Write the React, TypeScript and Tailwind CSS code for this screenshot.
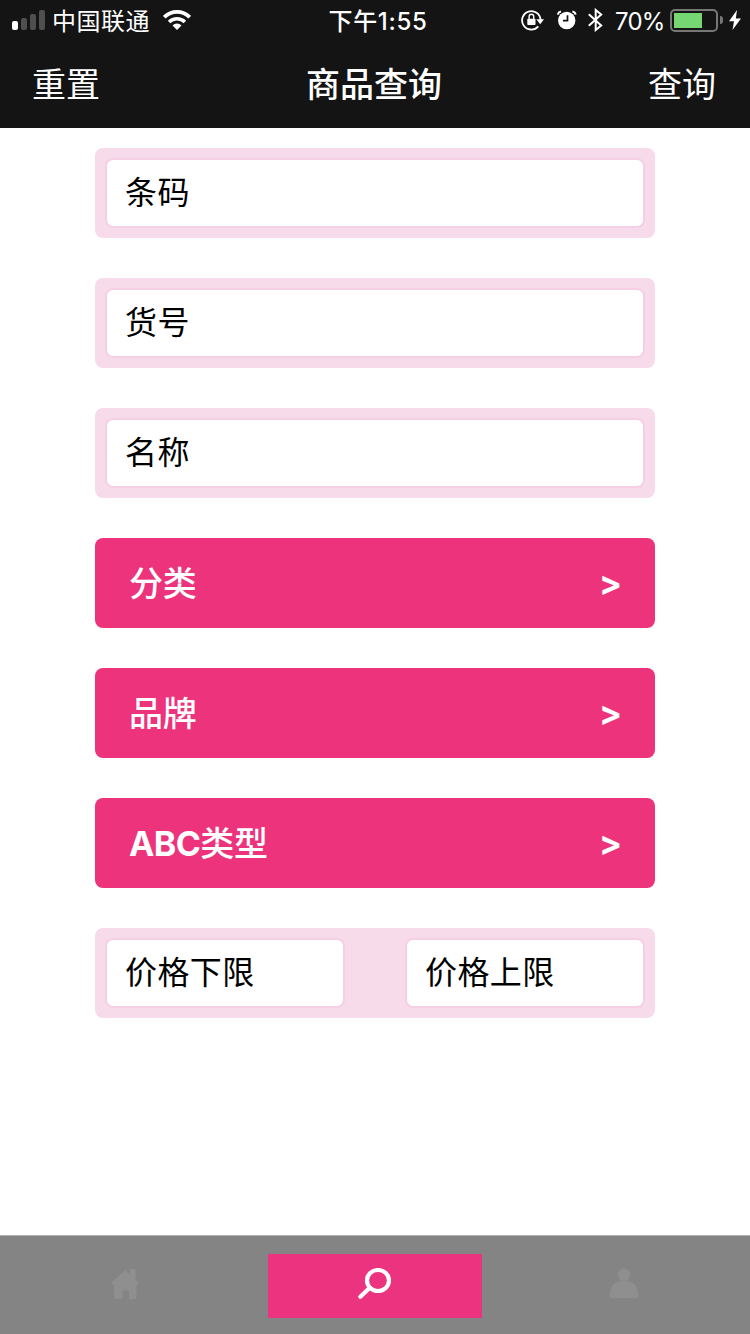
const textFields = ["条码", "货号", "名称"]
const pickers = ["分类", "品牌", "ABC类型"]

function StatusBar() {
  return (
    <div className="grid h-10 grid-cols-3 items-center text-2xl leading-10">
      <div className="flex items-center pl-3">
        <div className="flex h-5 items-end gap-[3px]">
          <span className="h-[9px] w-1.5 rounded-[2px] bg-white" />
          <span className="h-3 w-1.5 rounded-[2px] bg-[#4f4f4f]" />
          <span className="h-4 w-1.5 rounded-[2px] bg-[#4f4f4f]" />
          <span className="h-5 w-1.5 rounded-[2px] bg-[#4f4f4f]" />
        </div>
        <span className="ml-[7px] w-[98px] whitespace-nowrap pt-[3px] leading-[37px] tracking-[0.5px]">
          中国联通
        </span>
        <svg
          className="ml-[13px] h-5 w-7 shrink-0"
          viewBox="0 0 28 20"
          fill="none"
          stroke="currentColor">
          <path d="M1.3 7.2a18 18 0 0 1 25.4 0" strokeWidth="3.8" />
          <path d="M6.1 12.1a11.2 11.2 0 0 1 15.8 0" strokeWidth="3.5" />
          <path
            d="M9.5 15.4a6.5 6.5 0 0 1 9 0L14 20z"
            fill="currentColor"
            stroke="none"
          />
        </svg>
      </div>

      <div className="pl-1.5 pt-[3px] text-center font-medium leading-[37px] tracking-[0.7px]">
        下午1:55
      </div>

      <div className="flex items-center justify-end pr-[9px]">
        {/* Rotation lock */}
        <svg
          className="mr-px h-[22px] w-6 shrink-0"
          viewBox="0 0 24 22"
          fill="none">
          <path
            d="M17.3 17.3A9.2 9.2 0 1 1 19.5 11"
            stroke="currentColor"
            strokeWidth="1.8"
          />
          <path d="M15.3 10.2h7.7l-3.8 5z" fill="currentColor" />
          <rect x="6.3" y="9.7" width="8.2" height="6.3" rx="0.8" fill="currentColor" />
          <path
            d="M8.1 10V7.5a2.3 2.3 0 0 1 4.6 0V10"
            stroke="currentColor"
            strokeWidth="1.4"
          />
        </svg>
        {/* Alarm */}
        <svg
          className="ml-[11px] h-5 w-5 shrink-0"
          viewBox="0 0 20 20"
          fill="none"
          stroke="currentColor">
          <circle cx="9.7" cy="10.5" r="8.7" fill="currentColor" stroke="none" />
          <path d="M.8 4.6Q1.3 2 4 1.6M18.6 4.6Q18.1 2 15.4 1.6" strokeWidth="2" />
          <path d="M10.5 5.2v5.5H6" stroke="#141414" strokeWidth="1.7" />
        </svg>
        {/* Bluetooth */}
        <svg
          className="ml-[11px] h-6 w-[15px] shrink-0"
          viewBox="0 0 15 24"
          fill="none"
          stroke="currentColor"
          strokeWidth="2">
          <path d="M.8 6.3l12.4 11.2L7.7 22V2l5.5 4.6L.8 17.8" />
        </svg>
        <span className="ml-3 w-[49px] whitespace-nowrap pt-[3px] leading-[37px] tracking-[-0.8px]">
          70%
        </span>
        <div className="ml-[6px] h-[23px] w-12 shrink-0 rounded-[5px] border-2 border-[#777] p-0.5">
          <div className="h-full w-7 bg-[#76d672]" />
        </div>
        <div className="ml-0.5 h-2 w-[3px] rounded-r-full bg-[#777]" />
        <svg className="ml-[6px] h-5 w-3" viewBox="0 0 12 20" fill="currentColor">
          <path d="M8 0L0 11.3h5L3.5 20 12 8.4H6.8z" />
        </svg>
      </div>
    </div>
  )
}

function Field({label}: {label: string}) {
  return (
    <input
      className="h-[70px] w-full min-w-0 rounded-lg border-2 border-[#f5cfe3] bg-white px-[18px] pb-0.5 text-[32px] tracking-[0.4px] text-black outline-none placeholder:text-black placeholder:opacity-100"
      placeholder={label}
    />
  )
}

function TabBar() {
  return (
    <nav className="grid h-[99px] grid-cols-3 border-t border-[#b0b3b2] bg-[#848484] text-[#8f8f8f]">
      <div className="flex justify-center pt-8">
        <svg className="h-8 w-7" viewBox="0 0 28 32" fill="currentColor">
          <path d="M14 2L27.4 14.6Q28 17 25.4 17v12q0 2-2 2H18v-8.5h-6.5V31H5q-2 0-2-2V17Q.2 17 .8 14.6z" />
          <path d="M19 1h5.5v13H19z" />
        </svg>
      </div>
      <div className="mx-[18px] mt-[18px] flex h-16 justify-center bg-[#ec3380] pt-3.5 text-white">
        <svg
          className="mr-[3px] h-8 w-[34px]"
          viewBox="0 0 34 32"
          fill="none"
          stroke="currentColor"
          strokeWidth="4.2">
          <ellipse cx="21" cy="12.5" rx="11" ry="10.5" />
          <path d="M12.8 19.8L3.3 28.8" strokeLinecap="round" />
        </svg>
      </div>
      <div className="flex justify-center pt-8">
        <svg className="mr-0.5 h-[30px] w-7" viewBox="0 0 28 30" fill="currentColor">
          <circle cx="14" cy="6.8" r="6.2" />
          <path d="M0 30v-3.5C0 18 5.5 12.5 14 12.5s14 5.5 14 14V30z" />
        </svg>
      </div>
    </nav>
  )
}

export default function App() {
  return (
    <div className="flex h-[1334px] w-[750px] flex-col bg-white font-[Inter,'Noto_Sans_CJK_SC',sans-serif]">
      <header className="h-32 bg-[#141414] text-white">
        <StatusBar />
        <div className="flex h-[88px] items-center justify-between pl-8 pr-[34px] text-[34px]">
          <button>重置</button>
          <h1 className="font-medium">商品查询</h1>
          <button>查询</button>
        </div>
      </header>

      <main className="flex flex-1 flex-col items-center gap-10 pt-5">
        {textFields.map((label) => (
          <div
            key={label}
            className="h-[90px] w-[560px] rounded-lg bg-[#f8dbea] p-2.5">
            <Field label={label} />
          </div>
        ))}

        {pickers.map((label) => (
          <button
            key={label}
            className="flex h-[90px] w-[560px] items-center justify-between rounded-lg bg-[#ec337b] pl-[34px] pr-[33px] text-[34px] text-white">
            <span className="font-medium tracking-[-0.2px]">
              {label.startsWith("ABC") ? (
                <>
                  <span className="font-bold tracking-[-0.6px]">ABC</span>
                  {label.slice(3)}
                </>
              ) : (
                label
              )}
            </span>
            <span className="pb-0.5 font-bold">&gt;</span>
          </button>
        ))}

        {/* Price range */}
        <div className="flex h-[90px] w-[560px] gap-[60px] rounded-lg bg-[#f8dbea] p-2.5">
          <Field label="价格下限" />
          <Field label="价格上限" />
        </div>
      </main>

      <TabBar />
    </div>
  )
}
